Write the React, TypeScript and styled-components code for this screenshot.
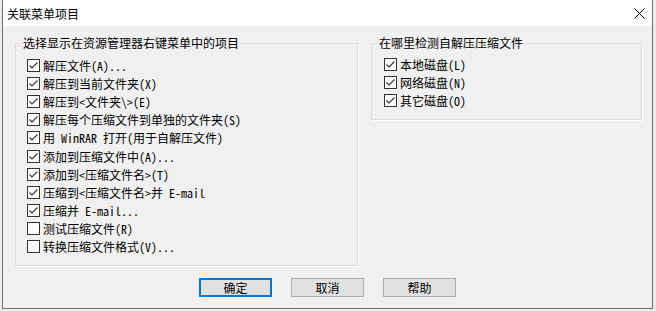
import React from "react";
import styled, { createGlobalStyle } from "styled-components";

const Global = createGlobalStyle`
  html, body { margin: 0; padding: 0; background: #ececec; }
  body { font-family: "Noto Sans CJK SC", sans-serif; }
`;

const Dialog = styled.div`
  margin-left: 2px;
  width: 649px;
  height: 308px;
  border: 1px solid #6f6f6f;
  border-top: none;
  background: #f0f0f0;
  display: flex;
  flex-direction: column;
`;

const TitleBar = styled.div`
  height: 26px;
  background: #ffffff;
  display: flex;
  align-items: center;
  padding-left: 4px;
`;

const Title = styled.span`
  flex: 1;
  font-family: "Noto Sans CJK SC", sans-serif;
  font-size: 12px;
  color: #000;
`;

const CloseBox = styled.div`
  width: 26px;
  height: 26px;
  display: flex;
  align-items: center;
  justify-content: center;
`;

const Body = styled.div`
  flex: 1;
  display: flex;
  flex-direction: column;
  padding: 17px 0 0 12px;
`;

const Groups = styled.div`
  display: flex;
  align-items: flex-start;
  gap: 13px;
`;

const GroupBox = styled.section<{ $w: number }>`
  width: ${(p) => p.$w}px;
  box-sizing: border-box;
  border: 1px solid #dcdcdc;
  box-shadow: 1px 1px 0 #ffffff;
  display: flex;
  flex-direction: column;
  align-items: flex-start;
`;

const Legend = styled.span`
  font-family: "Noto Sans CJK SC", sans-serif;
  font-size: 12px;
  line-height: 16px;
  color: #000;
  background: #f0f0f0;
  padding: 0 1px;
  margin: -9px 0 0 6px;
`;

const Items = styled.div<{ $pt: number; $pb: number; $pl: number }>`
  display: flex;
  flex-direction: column;
  padding: ${(p) => p.$pt}px 0 ${(p) => p.$pb}px ${(p) => p.$pl}px;
`;

const Row = styled.label`
  display: flex;
  align-items: center;
  height: 18.2px;
  gap: 3px;
`;

const Box = styled.span`
  width: 11px;
  height: 11px;
  border: 1px solid #333333;
  background: #ffffff;
  display: flex;
  align-items: center;
  justify-content: center;
  flex: none;
`;

const Label = styled.span`
  font-family: "Noto Sans Mono CJK SC", "Noto Sans CJK SC", monospace;
  font-size: 12px;
  color: #000;
  white-space: pre;
`;

const Buttons = styled.div`
  display: flex;
  justify-content: center;
  gap: 19px;
  margin-top: 12px;
  padding-right: 12px;
`;

const Button = styled.button<{ $default?: boolean }>`
  width: 73px;
  height: 19px;
  box-sizing: border-box;
  background: #e1e1e1;
  border: 1px solid ${(p) => (p.$default ? "#0078d7" : "#adadad")};
  box-shadow: ${(p) => (p.$default ? "inset 0 0 0 1px #0078d7" : "none")};
  font-family: "Noto Sans CJK SC", sans-serif;
  font-size: 12px;
  line-height: 1;
  color: #000;
  padding: 0;
  display: flex;
  align-items: center;
  justify-content: center;
`;

const Check = ({ on }: { on: boolean }) => (
  <Box>
    {on && (
      <svg width="11" height="11" viewBox="0 0 11 11">
        <polyline points="1.5,5.5 4,8 9.5,2.5" fill="none" stroke="#333" strokeWidth="1.1" />
      </svg>
    )}
  </Box>
);

const leftItems: [string, boolean][] = [
  ["解压文件(A)...", true],
  ["解压到当前文件夹(X)", true],
  ["解压到<文件夹\\>(E)", true],
  ["解压每个压缩文件到单独的文件夹(S)", true],
  ["用 WinRAR 打开(用于自解压文件)", true],
  ["添加到压缩文件中(A)...", true],
  ["添加到<压缩文件名>(T)", true],
  ["压缩到<压缩文件名>并 E-mail", true],
  ["压缩并 E-mail...", true],
  ["测试压缩文件(R)", false],
  ["转换压缩文件格式(V)...", false],
];

const rightItems: [string, boolean][] = [
  ["本地磁盘(L)", true],
  ["网络磁盘(N)", true],
  ["其它磁盘(O)", true],
];

export default function App() {
  return (
    <>
      <Global />
      <Dialog>
        <TitleBar>
          <Title>关联菜单项目</Title>
          <CloseBox>
            <svg width="11" height="11" viewBox="0 0 11 11">
              <path d="M0.5 0.5 L10.5 10.5 M10.5 0.5 L0.5 10.5" stroke="#000" strokeWidth="1" />
            </svg>
          </CloseBox>
        </TitleBar>
        <Body>
          <Groups>
            <GroupBox $w={343}>
              <Legend>选择显示在资源管理器右键菜单中的项目</Legend>
              <Items $pt={5} $pb={9} $pl={11}>
                {leftItems.map(([t, on]) => (
                  <Row key={t}>
                    <Check on={on} />
                    <Label>{t}</Label>
                  </Row>
                ))}
              </Items>
            </GroupBox>
            <GroupBox $w={271}>
              <Legend>在哪里检测自解压压缩文件</Legend>
              <Items $pt={4} $pb={9} $pl={12}>
                {rightItems.map(([t, on]) => (
                  <Row key={t}>
                    <Check on={on} />
                    <Label>{t}</Label>
                  </Row>
                ))}
              </Items>
            </GroupBox>
          </Groups>
          <Buttons>
            <Button $default>确定</Button>
            <Button>取消</Button>
            <Button>帮助</Button>
          </Buttons>
        </Body>
      </Dialog>
    </>
  );
}
